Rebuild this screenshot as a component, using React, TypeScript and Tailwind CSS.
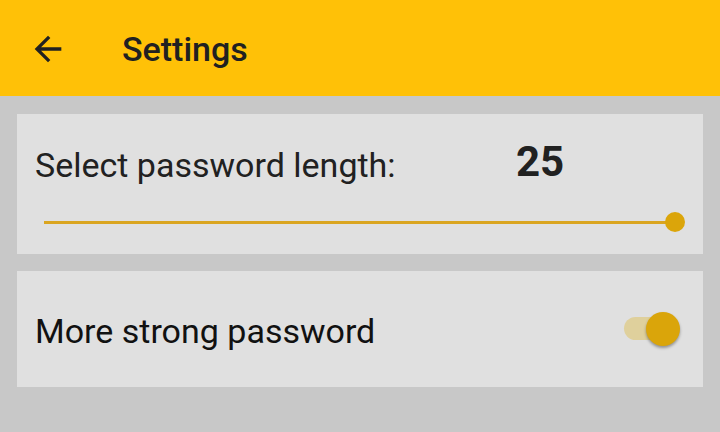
export default function App() {
  return (
    <div className="w-[720px] h-[432px] bg-[#c8c8c8] flex flex-col overflow-hidden" style={{ fontFamily: 'Roboto, "Noto Sans", sans-serif' }}>
      <div className="h-[96px] bg-[#ffc107] flex items-center shrink-0">
        <div className="w-[40px] h-[40px] ml-[28px] mt-[2px]">
          <svg viewBox="0 0 24 24" width="40" height="40" fill="#212121">
            <path d="M20 11H7.83l5.59-5.59L12 4l-8 8 8 8 1.41-1.41L7.83 13H20v-2z" />
          </svg>
        </div>
        <div className="ml-[54px] text-[34px] font-medium text-[#212121] leading-none mt-[2px]">Settings</div>
      </div>
      <div className="px-[17px] pt-[18px] flex flex-col gap-[17px]">
        <div className="h-[140px] bg-[#e0e0e0] flex flex-col">
          <div className="flex items-end h-[68px] pl-[18px]">
            <div className="text-[34px] text-[#212121] leading-none w-[481px]">Select password length:</div>
            <div className="text-[42px] font-bold text-[#212121] leading-none mb-[-1px]">25</div>
          </div>
          <div className="relative h-[20px] mt-[30px] mx-[27px]">
            <div className="absolute left-0 right-[-2px] top-[8.5px] h-[3px] bg-[#daa520]" />
            <div className="absolute right-[-9px] top-0 w-[20px] h-[20px] rounded-full bg-[#dba50a]" />
          </div>
        </div>
        <div className="h-[116px] bg-[#e0e0e0] flex items-center justify-between pl-[18px] pr-[23px]">
          <div className="text-[34px] text-[#111111] leading-none mt-[4px]">More strong password</div>
          <div className="relative w-[56px] h-[34px] flex items-center mt-[-1px]">
            <div className="absolute left-0 right-[2px] h-[23px] rounded-full bg-[#dfd09c]" />
            <div className="absolute right-0 w-[34px] h-[34px] rounded-full bg-[#daa50a] shadow-[0_2px_3px_rgba(0,0,0,0.35)]" />
          </div>
        </div>
      </div>
    </div>
  );
}
